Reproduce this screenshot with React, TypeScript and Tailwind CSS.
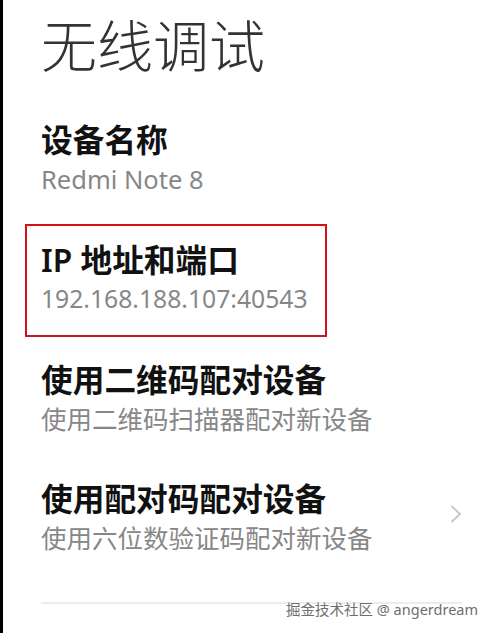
const font = { fontFamily: '"Noto Sans", "Noto Sans CJK SC", sans-serif' };

function Item({ title, sub, subSize = "text-[25.5px]", chevron }: { title: string; sub: string; subSize?: string; chevron?: boolean }) {
  return (
    <div className="flex items-center justify-between">
      <div>
        <div className="text-[31.7px] leading-[40px] font-semibold text-[#111]">{title}</div>
        <div className={`${subSize} leading-[38px] text-[#878787]`}>{sub}</div>
      </div>
      {chevron && (
        <svg width="12" height="18" viewBox="0 0 12 18" className="-mt-[8px]">
          <path d="M2 1.5 L10 9 L2 16.5" fill="none" stroke="#c6c6c6" strokeWidth="1.8" strokeLinecap="round" strokeLinejoin="round" />
        </svg>
      )}
    </div>
  );
}

export default function App() {
  return (
    <div className="relative flex h-[633px] w-[495px] overflow-hidden bg-white" style={font}>
      <div className="w-[3px] shrink-0 bg-black" />
      <div className="flex-1 pl-[38px] pr-[33px]">
        <h1 className="mt-[13px] text-[56px] leading-[64px] font-light text-[#333]">无线调试</h1>

        <div className="mt-[43px]">
          <Item title="设备名称" sub="Redmi Note 8" />
        </div>

        <div className="mt-[26px] -mb-[19px] -ml-[16px] w-[302px] border-2 border-[#d0121b] pt-[14px] pb-[17px] pl-[14px]">
          <Item title="IP 地址和端口" sub="192.168.188.107:40543" subSize="text-[24.7px]" />
        </div>

        <div className="mt-[42px]">
          <Item title="使用二维码配对设备" sub="使用二维码扫描器配对新设备" />
        </div>

        <div className="mt-[41px]">
          <Item title="使用配对码配对设备" sub="使用六位数验证码配对新设备" chevron />
        </div>

        <div className="mt-[45px] h-[2px] bg-[#ececec]" />
      </div>

      <div
        className="absolute right-[17px] bottom-[14px] text-[14.5px] leading-[20px] text-[#6e6e6e]"
        style={{ textShadow: "0 0 2px #fff, 0 0 2px #fff" }}
      >
        掘金技术社区 @ angerdream
      </div>
    </div>
  );
}
